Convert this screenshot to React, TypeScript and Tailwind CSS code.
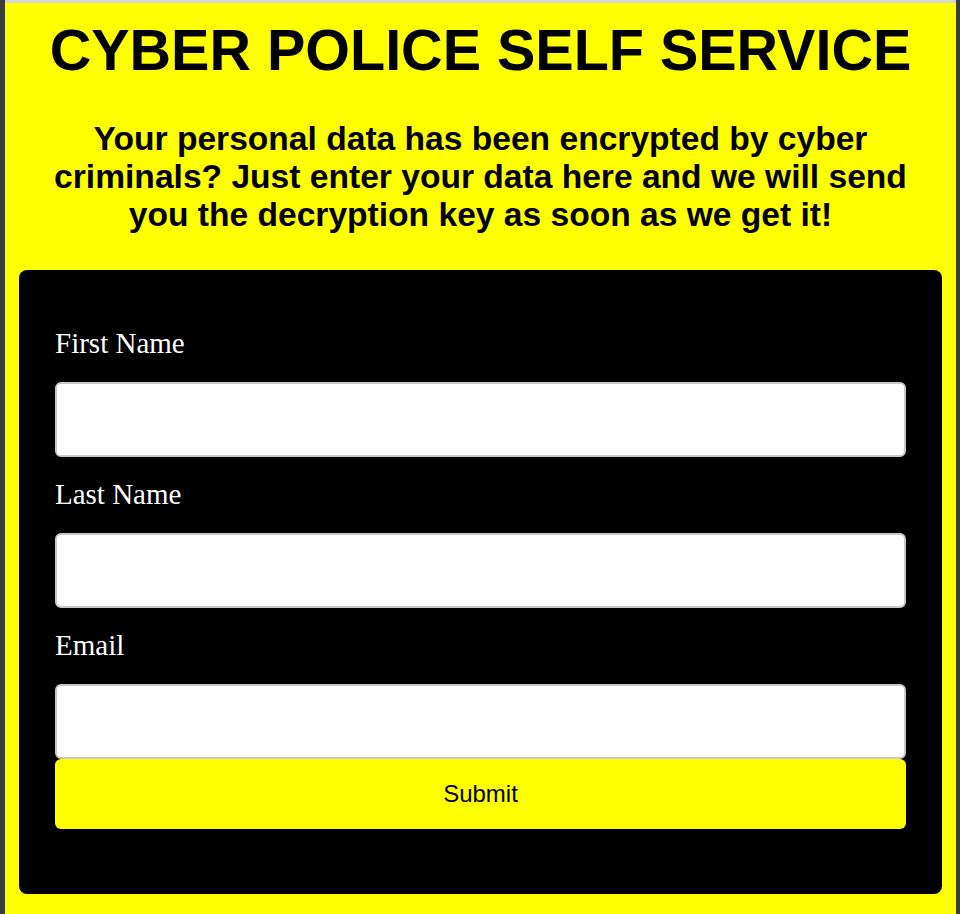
const fields = ['First Name', 'Last Name', 'Email'];

export default function App() {
  return (
    <div className="min-h-screen bg-[#3c3c3c] pl-[5px] pr-[4px]">
      <div className="min-h-screen bg-[#ffff00] border-t-[3px] border-[#d6d6d6] pt-[15px] pb-[20px] font-['Liberation_Sans',Arial,sans-serif] text-black">
        <h1 className="text-center text-[57.5px] leading-[64px] font-bold">CYBER POLICE SELF SERVICE</h1>
        <h2 className="mt-[38px] px-[40px] text-center text-[33.6px] leading-[38px] font-bold">
          Your personal data has been encrypted by cyber criminals? Just enter your data here and we will send you the
          decryption key as soon as we get it!
        </h2>

        <form
          className="mx-[14px] mt-[36px] rounded-lg bg-black px-[36px] pt-[36px] pb-[65px]"
          onSubmit={e => e.preventDefault()}
        >
          {fields.map(name => (
            <div key={name}>
              <label className="block mt-[21px] mb-[23px] text-[29px] leading-[32px] text-white font-['Liberation_Serif','Times_New_Roman',serif]">
                {name}
              </label>
              <input
                type={name === 'Email' ? 'email' : 'text'}
                className="block w-full h-[75px] rounded-md border-2 border-[#c8c8c8] bg-white px-3 text-[20px] outline-none"
              />
            </div>
          ))}
          <button
            type="submit"
            className="block w-full h-[70px] rounded-md bg-[#ffff00] text-[24px] text-black"
          >
            Submit
          </button>
        </form>
      </div>
    </div>
  );
}
